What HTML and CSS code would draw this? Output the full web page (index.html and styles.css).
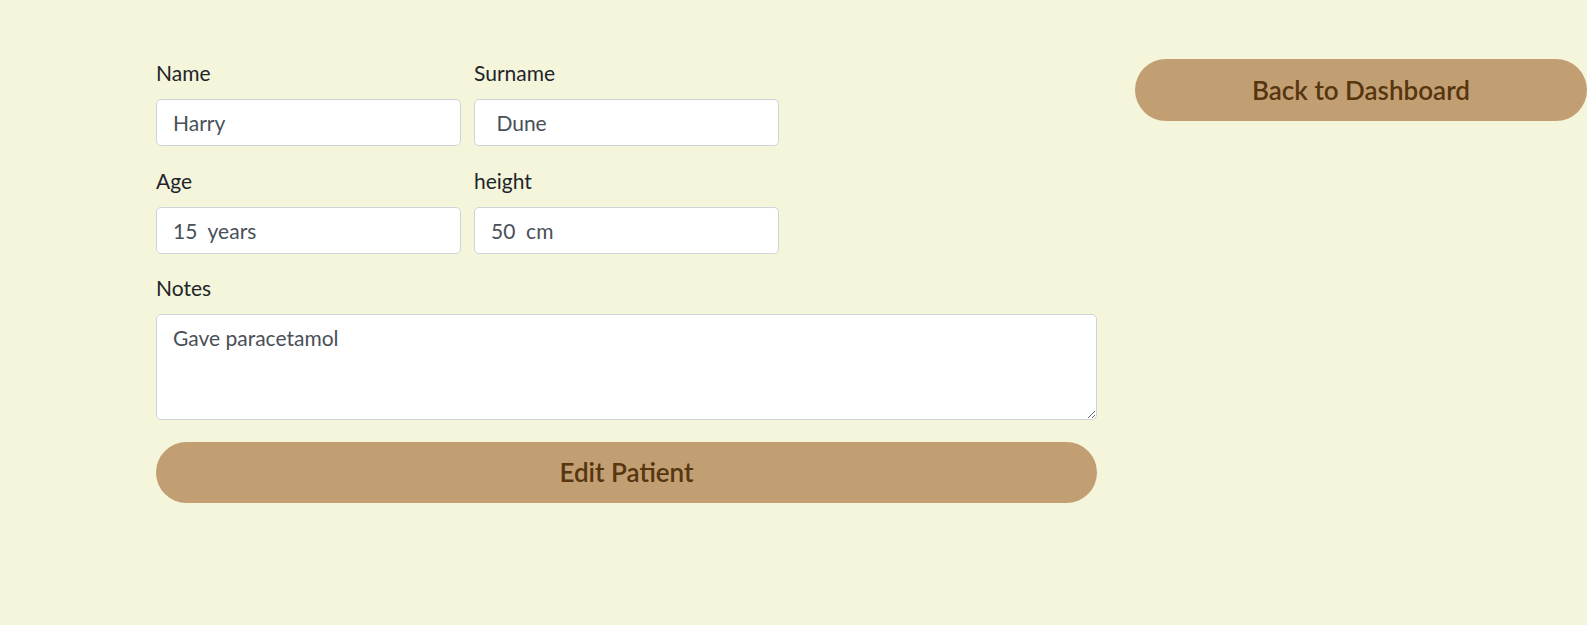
FILE: index.html
```html
<!DOCTYPE html>
<html lang="en">
<head>
<meta charset="utf-8">
<title>Edit Patient</title>
<link rel="stylesheet" href="styles.css">
</head>
<body>
<div class="page">
  <form class="patient-form">
    <div class="row">
      <div class="field">
        <label class="label" for="name">Name</label>
        <input class="input" id="name" type="text" value="Harry">
      </div>
      <div class="field">
        <label class="label" for="surname">Surname</label>
        <input class="input" id="surname" type="text" value=" Dune">
      </div>
    </div>
    <div class="row">
      <div class="field">
        <label class="label" for="age">Age</label>
        <input class="input" id="age" type="text" value="15  years">
      </div>
      <div class="field">
        <label class="label" for="height">height</label>
        <input class="input" id="height" type="text" value="50  cm">
      </div>
    </div>
    <div class="field">
      <label class="label" for="notes">Notes</label>
      <textarea class="textarea" id="notes">Gave paracetamol</textarea>
    </div>
    <button class="btn btn-wide" type="button">Edit Patient</button>
  </form>
  <div class="side">
    <button class="btn" type="button">Back to Dashboard</button>
  </div>
</div>
</body>
</html>
```

FILE: styles.css
```css
html, body {
  margin: 0;
  padding: 0;
  background: #f5f5dc;
}

body {
  font-family: Lato, "Liberation Sans", sans-serif;
  color: #212529;
}

.page {
  display: flex;
  gap: 38px;
  padding: 59px 0 0 156px;
}

.patient-form {
  width: 941px;
  display: flex;
  flex-direction: column;
}

.row {
  display: grid;
  grid-template-columns: 305px 305px;
  column-gap: 13px;
}

.field {
  display: flex;
  flex-direction: column;
  margin-bottom: 20.5px;
}

.label {
  font-size: 21px;
  line-height: 28px;
  margin-bottom: 12px;
  color: #212529;
}

.input,
.textarea {
  box-sizing: border-box;
  font-family: inherit;
  font-size: 21px;
  color: #495057;
  background: #fff;
  border: 1px solid #ced4da;
  border-radius: 5px;
  padding: 0 16px;
  margin: 0;
  outline: none;
}

.input {
  height: 47px;
  width: 100%;
}

.textarea {
  width: 941px;
  height: 106px;
  padding-top: 7px;
  line-height: 1.5;
  resize: vertical;
}

.btn {
  box-sizing: border-box;
  font-family: inherit;
  font-size: 26px;
  font-weight: 600;
  color: #55360f;
  background: #c29e73;
  border: none;
  border-radius: 31px;
  height: 62px;
  width: 100%;
  cursor: pointer;
  padding: 0;
}

.btn-wide {
  height: 61px;
  margin-top: 1px;
}

.side {
  flex: 1;
}
```
